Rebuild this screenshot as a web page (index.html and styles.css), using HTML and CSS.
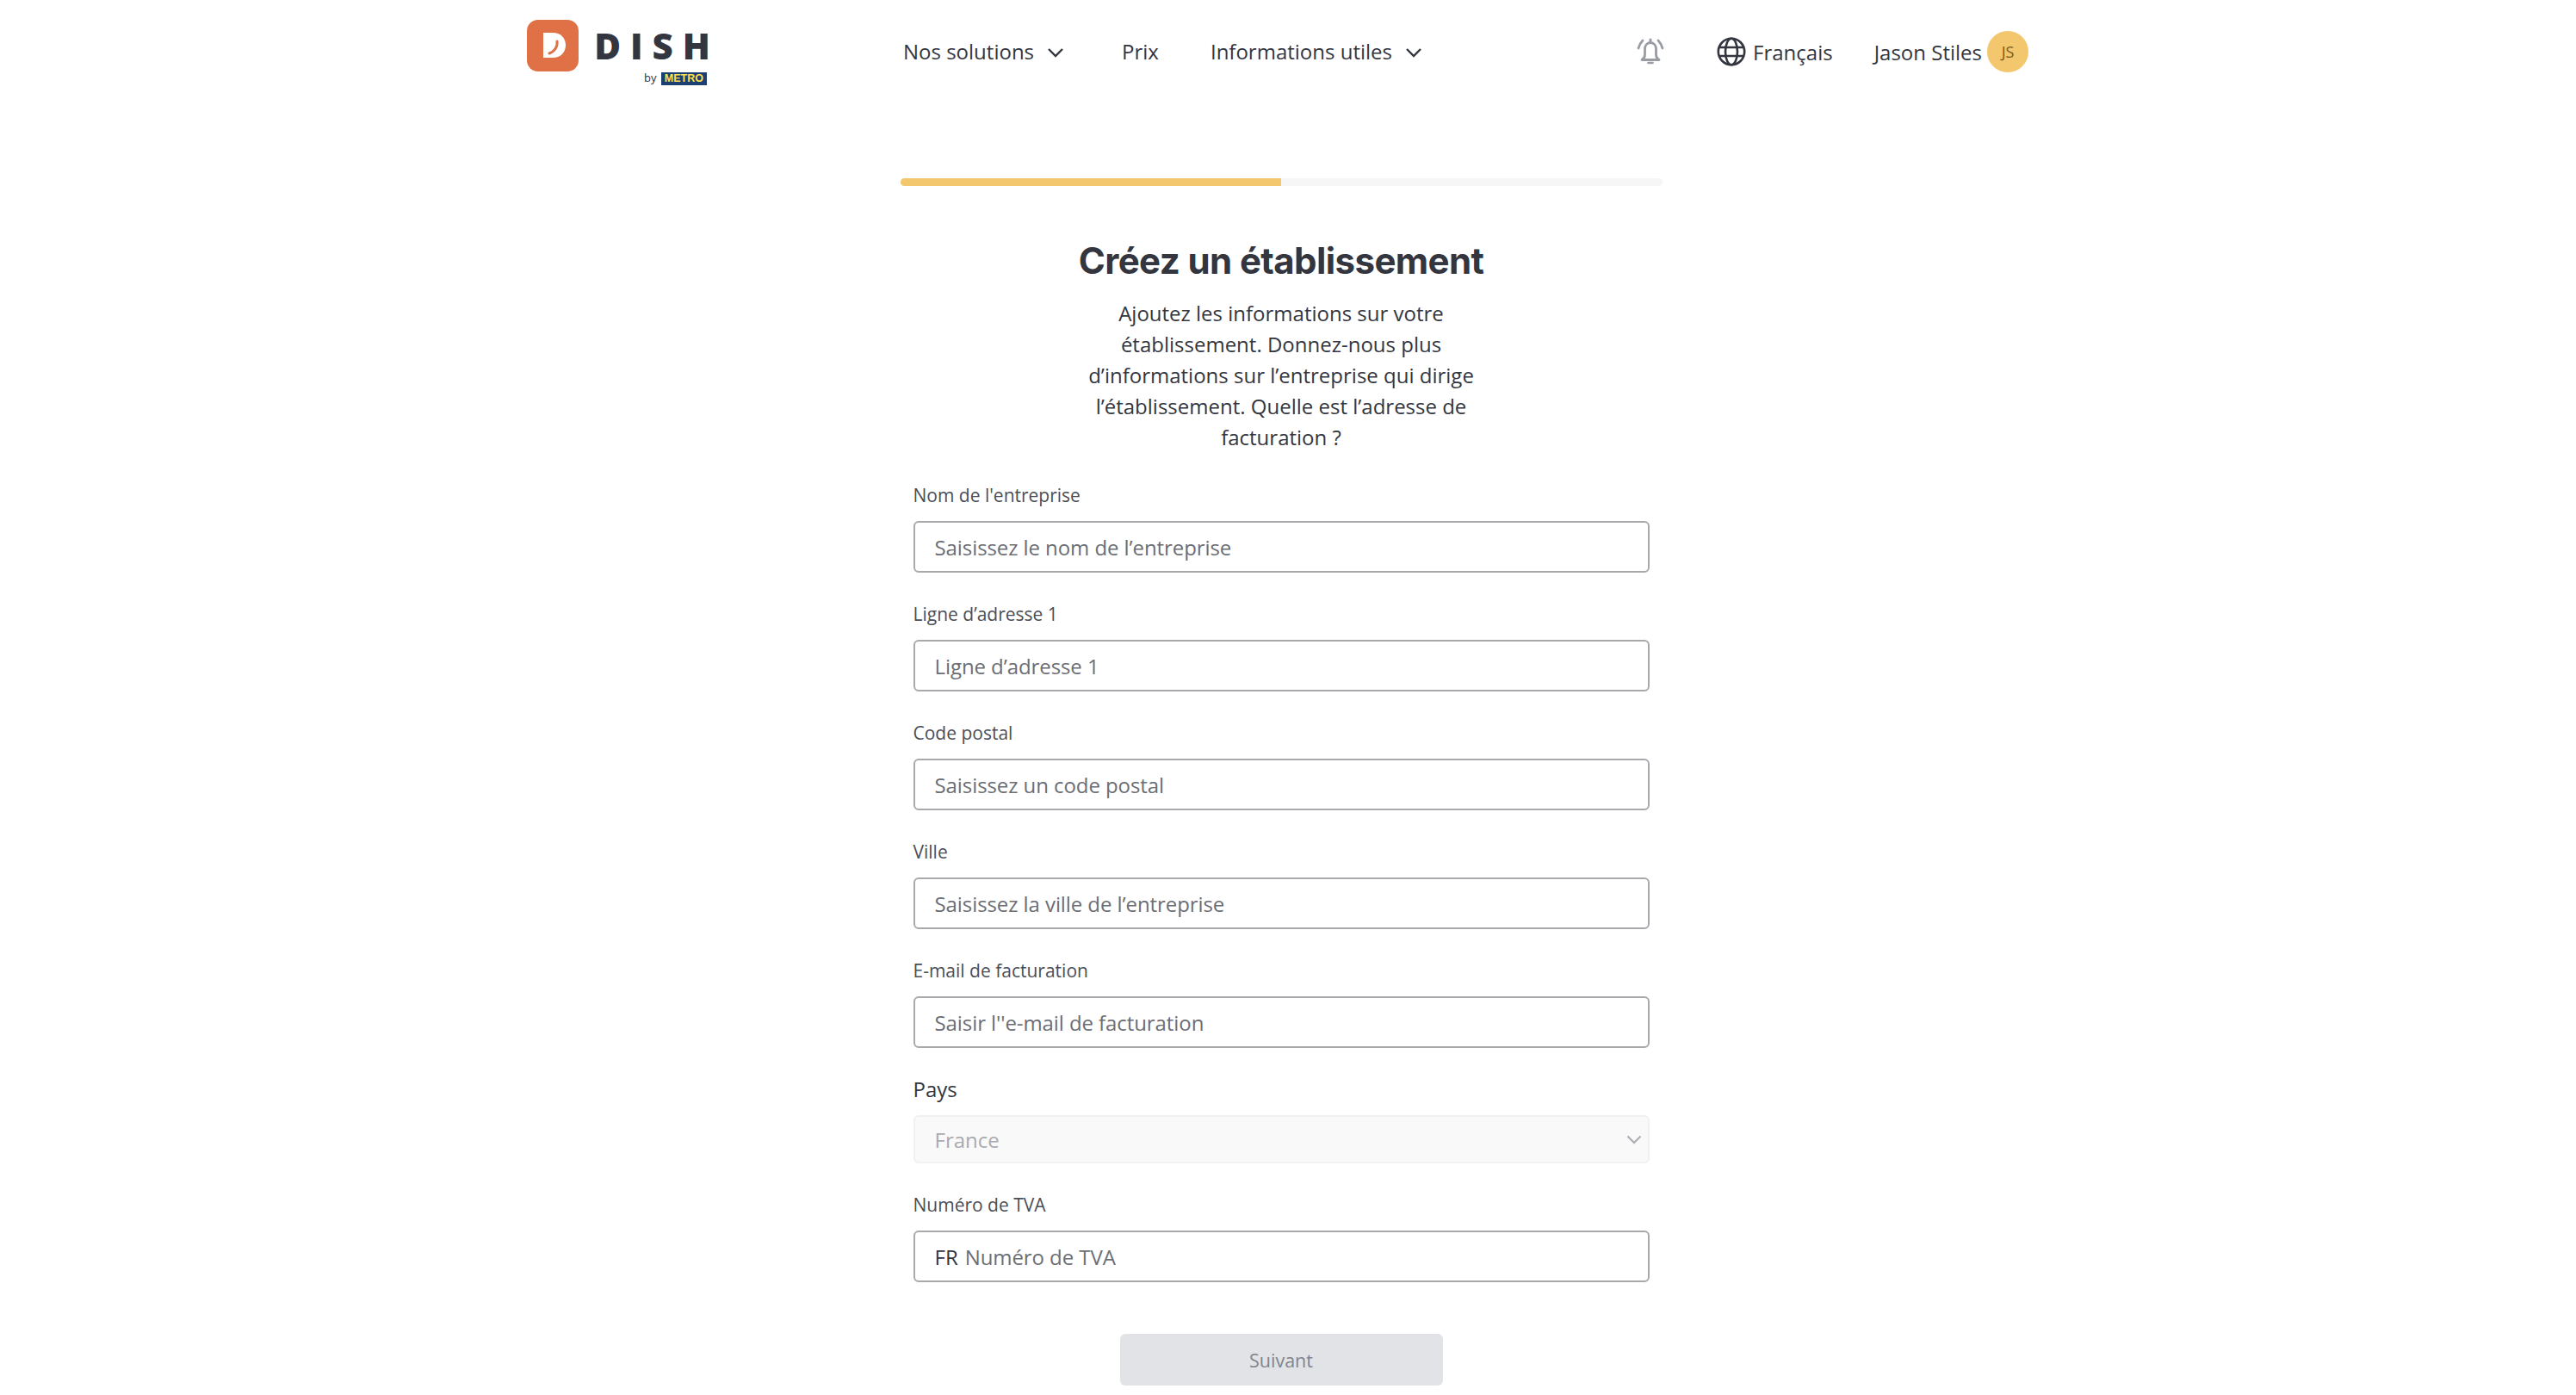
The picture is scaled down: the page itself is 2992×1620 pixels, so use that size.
FILE: index.html
```html
<!DOCTYPE html>
<html lang="fr">
<head>
    <meta charset="UTF-8">
    <title>Créez un établissement</title>
    <link rel="stylesheet" href="styles.css">
</head>
<body>
    <header class="topbar">
        <a class="logo">
            <span class="logo-mark">
                <svg width="60" height="60" viewBox="0 0 60 60">
                    <rect width="60" height="60" rx="13" fill="#e07146"/>
                    <path d="M19 15h11c9 0 15 6 15 14.500S39 44 30 44H19z" fill="#fff"/>
                    <path d="M35 25c1 6-3 12-9 14" fill="none" stroke="#e07146" stroke-width="3" stroke-linecap="round"/>
                </svg>
            </span>
            <span class="logo-text">
                <span class="logo-name">DISH</span>
                <span class="logo-by">by <span class="metro">METRO</span></span>
            </span>
        </a>
        <nav class="nav">
            <a class="nav-item has-menu">Nos solutions
                <svg class="chevron" width="20" height="12" viewBox="0 0 20 12"><path d="M2 2l8 8 8-8" fill="none" stroke="#33363f" stroke-width="2.4"/></svg>
            </a>
            <a class="nav-item">Prix</a>
            <a class="nav-item has-menu">Informations utiles
                <svg class="chevron" width="20" height="12" viewBox="0 0 20 12"><path d="M2 2l8 8 8-8" fill="none" stroke="#33363f" stroke-width="2.4"/></svg>
            </a>
        </nav>
        <div class="topbar-right">
            <svg class="bell" width="32" height="32" viewBox="0 0 32 32" fill="none" stroke="#9a9ca3" stroke-width="2.800">
                <path d="M6 25.500c2.500-1.500 3.500-3.500 3.500-6V13c0-4.500 2.800-7.500 6.500-7.500s6.500 3 6.500 7.500v6.500c0 2.500 1 4.500 3.500 6z" stroke-linejoin="round"/>
                <path d="M13.500 29h5" stroke-width="2.600" stroke-linecap="round"/>
                <path d="M16 2v2" stroke-width="3" stroke-linecap="round"/>
                <path d="M7 3C4.500 5.500 3 8.500 2 12M25 3c2.500 2.500 4 5.500 5 9" stroke-linecap="round"/>
            </svg>
            <a class="lang">
                <svg width="34" height="34" viewBox="0 0 34 34" fill="none" stroke="#33363f" stroke-width="2.600">
                    <circle cx="17" cy="17" r="15.200"/>
                    <ellipse cx="17" cy="17" rx="7" ry="15.200"/>
                    <path d="M3 12h28M3 22h28"/>
                </svg>
                Français
            </a>
            <a class="user">Jason Stiles <span class="avatar">JS</span></a>
        </div>
    </header>

    <main class="wizard">
        <div class="progress"><div class="progress-fill"></div></div>
        <h1>Créez un établissement</h1>
        <p class="intro">Ajoutez les informations sur votre établissement. Donnez-nous plus d’informations sur l’entreprise qui dirige l’établissement. Quelle est l’adresse de facturation ?</p>

        <form class="form">
            <div class="field">
                <label>Nom de l'entreprise</label>
                <input type="text" placeholder="Saisissez le nom de l’entreprise">
            </div>
            <div class="field">
                <label>Ligne d’adresse 1</label>
                <input type="text" placeholder="Ligne d’adresse 1">
            </div>
            <div class="field">
                <label>Code postal</label>
                <input type="text" placeholder="Saisissez un code postal">
            </div>
            <div class="field">
                <label>Ville</label>
                <input type="text" placeholder="Saisissez la ville de l’entreprise">
            </div>
            <div class="field">
                <label>E-mail de facturation</label>
                <input type="text" placeholder="Saisir l''e-mail de facturation">
            </div>
            <div class="field field-country">
                <label>Pays</label>
                <div class="select">
                    <span>France</span>
                    <svg width="18" height="11" viewBox="0 0 18 11"><path d="M1.500 1.500L9 9l7.500-7.500" fill="none" stroke="#a9abb0" stroke-width="2"/></svg>
                </div>
            </div>
            <div class="field">
                <label>Numéro de TVA</label>
                <div class="input-prefix">
                    <span>FR</span>
                    <input type="text" placeholder="Numéro de TVA">
                </div>
            </div>
            <button type="button" class="next">Suivant</button>
        </form>
    </main>
</body>
</html>
```

FILE: styles.css
```css
* {
    box-sizing: border-box;
}

html,
body {
    height: 1620px;
    overflow: hidden;
}

body {
    margin: 0;
    padding-right: 16px;
    font-family: 'Open Sans', sans-serif;
    color: #33363f;
    background-color: #ffffff;
}

.topbar {
    display: flex;
    align-items: center;
    width: 1752px;
    height: 120px;
    margin: 0 auto;
    padding-right: 8px;
}

.logo {
    display: flex;
    align-items: flex-start;
    align-self: flex-start;
    width: 437px;
    height: 75px;
    margin-top: 23px;
}

.logo-mark {
    display: block;
    width: 60px;
    height: 60px;
}

.logo-text {
    display: flex;
    flex-direction: column;
    align-items: flex-end;
    width: 149px;
}

.logo-name {
    font-size: 42px;
    font-weight: 800;
    line-height: 59px;
    letter-spacing: 11px;
    margin: 0 -15px 1px 0;
}

.logo-by {
    font-size: 13px;
    line-height: 15px;
}

.metro {
    display: inline-block;
    margin-left: 2px;
    padding: 0 4px;
    background-color: #1c3f72;
    color: #ffe14d;
    font-family: 'Liberation Sans', sans-serif;
    font-size: 12.500px;
    font-weight: 700;
    line-height: 15px;
}

.nav {
    display: flex;
    align-items: center;
    gap: 60px;
}

.nav-item {
    display: flex;
    align-items: center;
    gap: 15px;
    font-size: 24px;
    line-height: 34px;
}

.has-menu {
    margin-right: 7px;
}

.chevron {
    margin-top: 2px;
}

.topbar-right {
    display: flex;
    align-items: center;
    margin-left: auto;
    font-size: 24px;
}

.bell {
    margin-right: 61px;
}

.lang {
    display: flex;
    align-items: center;
    gap: 8px;
    margin-right: 48px;
}

.user {
    display: flex;
    align-items: center;
    gap: 6px;
}

.avatar {
    display: flex;
    align-items: center;
    justify-content: center;
    width: 48px;
    height: 48px;
    border-radius: 50%;
    background-color: #f3c76e;
    color: #7a5a1e;
    font-size: 18px;
}

.wizard {
    width: 885px;
    margin: 87px auto 0;
}

.progress {
    height: 9px;
    border-radius: 5px;
    background-color: #f6f6f6;
    overflow: hidden;
}

.progress-fill {
    width: 50%;
    height: 100%;
    background-color: #f3c76e;
}

h1 {
    margin: 59px 0 0;
    font-family: 'Inter', sans-serif;
    font-size: 42px;
    font-weight: 700;
    line-height: 56px;
    letter-spacing: -0.6px;
    text-align: center;
}

.intro {
    width: 460px;
    margin: 15px auto 0;
    font-size: 24px;
    line-height: 36px;
    text-align: center;
}

.form {
    display: flex;
    flex-direction: column;
    align-items: center;
    margin-top: 35px;
}

.field {
    width: 855px;
    margin-bottom: 34px;
}

.field label {
    display: block;
    margin-bottom: 16px;
    font-size: 21px;
    line-height: 28px;
    color: #4b4e57;
}

.field input {
    display: block;
    width: 100%;
    height: 60px;
    padding: 0 23px;
    border: 2px solid #a8a9ad;
    border-radius: 6px;
    outline: none;
    background-color: #ffffff;
    font-family: inherit;
    font-size: 24px;
    letter-spacing: -0.08px;
    color: #33363f;
}

.field input::placeholder {
    color: #6b6e75;
    opacity: 1;
}

.field-country label {
    font-size: 24px;
    color: #33363f;
}

.select {
    display: flex;
    align-items: center;
    justify-content: space-between;
    height: 56px;
    padding: 0 7px 0 23px;
    border: 2px solid #f1f1f2;
    border-radius: 6px;
    background-color: #f9f9f9;
    font-size: 24px;
    color: #a9abb0;
}

.input-prefix {
    display: flex;
    align-items: center;
    height: 60px;
    padding-left: 23px;
    border: 2px solid #a8a9ad;
    border-radius: 6px;
    font-size: 24px;
}

.input-prefix input {
    flex: 1;
    height: 100%;
    padding: 0 0 0 8px;
    border: none;
    background: transparent;
}

.next {
    width: 375px;
    height: 60px;
    margin-top: 26px;
    border: none;
    border-radius: 6px;
    background-color: #e2e3e7;
    font-family: inherit;
    font-size: 21.500px;
    color: #81848c;
}
```
